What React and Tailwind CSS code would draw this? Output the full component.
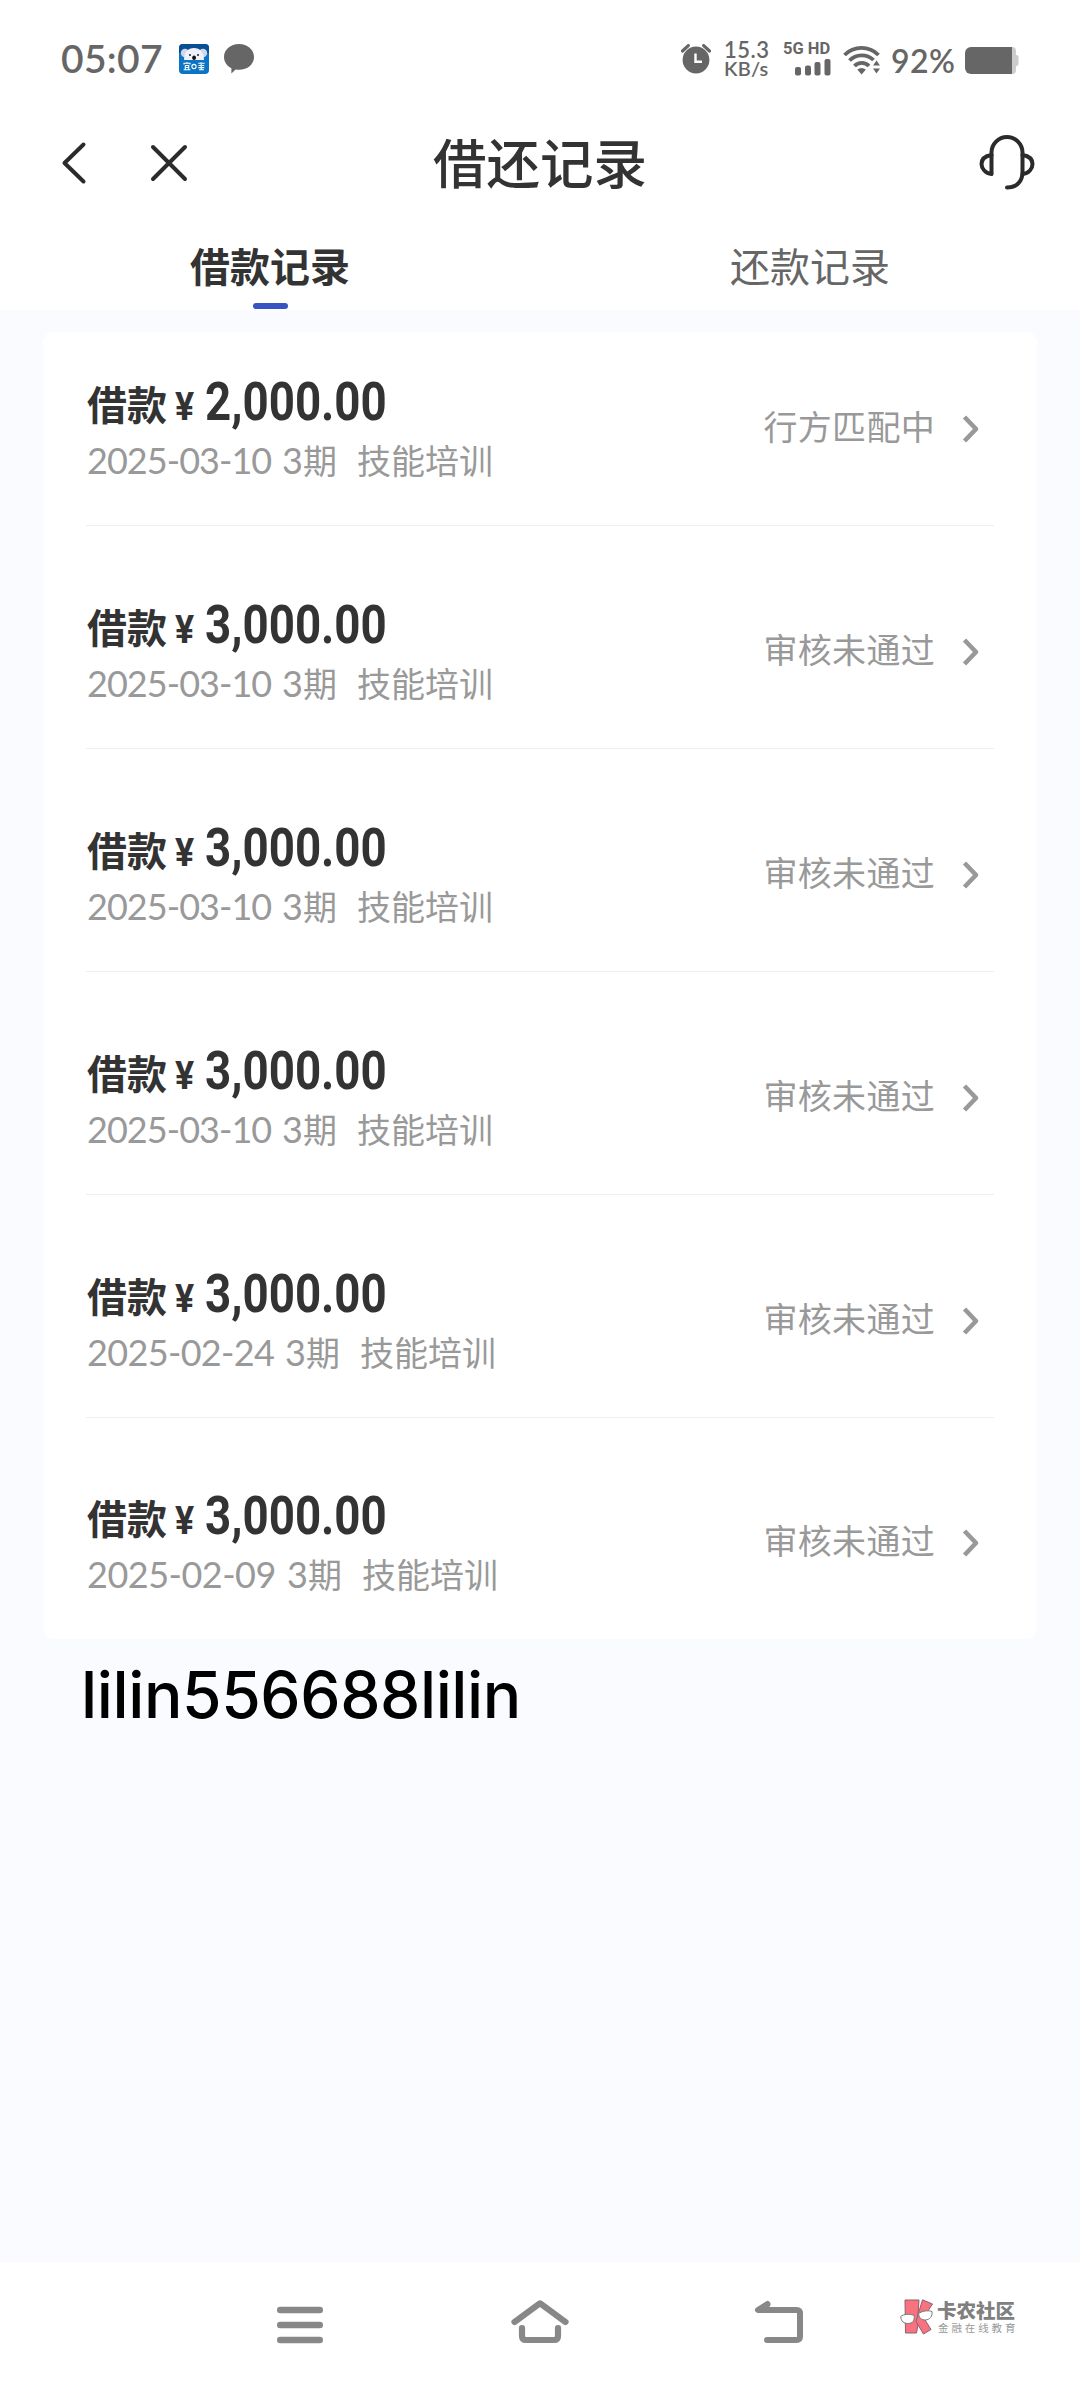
import React from 'react'

const records = [
  { amount: '2,000.00', date: '2025-03-10', status: '行方匹配中', dateClass: 'w-[195px] tracking-[-0.95px]' },
  { amount: '3,000.00', date: '2025-03-10', status: '审核未通过', dateClass: 'w-[195px] tracking-[-0.95px]' },
  { amount: '3,000.00', date: '2025-03-10', status: '审核未通过', dateClass: 'w-[195px] tracking-[-0.95px]' },
  { amount: '3,000.00', date: '2025-03-10', status: '审核未通过', dateClass: 'w-[195px] tracking-[-0.95px]' },
  { amount: '3,000.00', date: '2025-02-24', status: '审核未通过', dateClass: 'w-[198px] tracking-[-0.65px]' },
  { amount: '3,000.00', date: '2025-02-09', status: '审核未通过', dateClass: 'w-[200px] tracking-[-0.5px]' },
]

const AppBadge = () => (
  <svg className="w-[30px] h-[30px] ml-[18px]" viewBox="0 0 30 30">
    <rect width="30" height="30" rx="4" fill="#0b74c4" />
    <path d="M0 4a4 4 0 0 1 4-4h22a4 4 0 0 1 4 4v5H0z" fill="#0a4f94" />
    <circle cx="6" cy="9" r="4.2" fill="#cfd6ee" />
    <circle cx="24" cy="9" r="4.2" fill="#cfd6ee" />
    <path d="M5 16c0-8 4-12 10-12s10 4 10 12z" fill="#eef1fa" />
    <circle cx="11" cy="11" r="1" fill="#222" />
    <circle cx="19" cy="11" r="1" fill="#222" />
    <rect x="13.3" y="11.5" width="3.6" height="4.5" rx="1.8" fill="#111" />
    <g stroke="#fff" strokeWidth="1.1" fill="none">
      <path d="M5 20.5v-1.2h6v1.2M8 18v1.3M6.3 21.5h3.4v4M6.3 21.5v4M6.3 23.5h3.4M4.6 25.8h6.8" />
      <circle cx="15" cy="22.5" r="2.1" />
      <path d="M19.2 19.3h2.6M23 19.3h2.6M19.5 21.5h2.4M23 21.5h2.2M19.3 23.6h6M20 25.8h5M22.2 18.2v7.4" />
    </g>
  </svg>
)

const StatusBar = () => (
  <div className="h-[110px] flex items-start pt-[42px] pl-[61px] pr-[61px] text-[#666]">
    <span className="w-[100px] -mt-px whitespace-nowrap font-['Lato'] font-semibold text-[39px] leading-[34px] tracking-[0.3px]">05:07</span>
    <div className="flex pt-[2px]">
      <AppBadge />
      <svg className="w-[30px] h-[30px] ml-[15px]" viewBox="0 0 30 30" fill="#666">
        <path d="M15 0C23.5 0 30 5.6 30 13s-6.500 12.800-15 12.800c-1.200 0-2.300-.1-3.400-.300L7.400 29.400V24.200C2.900 22 0 17.900 0 13 0 5.600 6.500 0 15 0z" />
      </svg>
    </div>
    <div className="flex-1" />
    <svg className="w-[30px] h-[30px] mt-[2px]" viewBox="0 0 30 30">
      <circle cx="15" cy="16" r="13.400" fill="#666" />
      <path d="M1.500 7L7.300 1.600M28.500 7L22.700 1.600" stroke="#666" strokeWidth="3.200" strokeLinecap="round" />
      <path d="M14.500 9.500v8.300h6.500" stroke="#fff" strokeWidth="2.400" fill="none" />
    </svg>
    <div className="ml-[13px] w-[48px] font-['Lato'] font-semibold whitespace-nowrap -mt-[2px]">
      <div className="text-[22px] leading-[19px] tracking-[0.5px]">15.3</div>
      <div className="text-[20px] leading-[19px] tracking-[0.200px]">KB/s</div>
    </div>
    <div className="ml-[11px] w-[48px]">
      <div className="font-['Roboto'] font-bold text-[16.500px] leading-[13px] whitespace-nowrap">5G HD</div>
      <svg className="w-[36px] h-[17px] ml-[12px] mt-[4px]" viewBox="0 0 36 17" fill="#666">
        <rect x="0" y="8" width="6" height="8.500" rx="2" />
        <rect x="10" y="6.500" width="6" height="10" rx="2" />
        <rect x="19.500" y="3" width="6" height="13.500" rx="2" />
        <rect x="29.500" y="0" width="6" height="16.500" rx="2" />
      </svg>
    </div>
    <svg className="w-[38px] h-[30px] ml-[12px] mt-[3px]" viewBox="0 0 38 30" fill="none" stroke="#666" strokeWidth="3.800">
      <path d="M1.500 10a24 24 0 0 1 34 0" />
      <path d="M6.500 15.500a17 17 0 0 1 24-.500" />
      <path d="M11.500 21a10 10 0 0 1 14.500 0" />
      <path d="M14.300 24.500q4.300-3.200 8.600 0l-4.300 5z" fill="#666" stroke="none" />
      <path d="M30 20.500l3.500-5 3.500 5zM30 23.500l3.500 5 3.500-5z" fill="#666" stroke="none" />
    </svg>
    <span className="ml-[10px] w-[68px] mt-[3px] whitespace-nowrap font-['Lato'] font-semibold text-[32px] leading-[32px] tracking-[0.400px]">92%</span>
    <svg className="w-[54px] h-[27px] ml-[6px] mt-[5px]" viewBox="0 0 54 27">
      <rect x="40" width="11" height="27" rx="4" fill="#ccc" />
      <rect x="48" y="8" width="5.500" height="11" rx="2" fill="#ccc" />
      <path d="M6 0h41v27H6a6 6 0 0 1-6-6V6a6 6 0 0 1 6-6z" fill="#666" />
    </svg>
  </div>
)

const TitleBar = () => (
  <div className="h-[105px] flex items-center pl-[60px] pr-[45px] text-[#333]">
    <svg className="w-[30px] h-[44px]" viewBox="0 0 30 44" fill="none" stroke="#2b2b2b" strokeWidth="4" strokeLinecap="round" strokeLinejoin="round">
      <path d="M23.500 3.500L4.500 22l19 18.500" />
    </svg>
    <svg className="w-[40px] h-[40px] ml-[59px]" viewBox="0 0 40 40" fill="none" stroke="#2b2b2b" strokeWidth="4" strokeLinecap="round">
      <path d="M4 4l32 32M36 4L4 36" />
    </svg>
    <h1 className="flex-1 pl-[244px] -mt-[4px] font-['Noto_Sans_CJK_SC'] font-medium text-[53.500px] leading-[80px] whitespace-nowrap">借还记录</h1>
    <svg className="w-[56px] h-[56px] -mt-[2px]" viewBox="0 0 56 56" fill="none" stroke="#2b2b2b" strokeWidth="4" strokeLinecap="round">
      <path d="M12.500 39V18.500a15.500 15.500 0 0 1 31 0V38c0 9-5.500 15.500-15.500 15.500" />
      <path d="M12.500 21C6 22 2.500 25.500 2.500 30s4 9.500 10 10M43.500 21c6.500 1 10 4.500 10 9s-3.500 9.500-10 10" />
    </svg>
  </div>
)

const Tabs = () => (
  <div className="h-[95px] grid grid-cols-2 font-['Noto_Sans_CJK_SC'] text-[40px] leading-[60px] text-center">
    <div className="flex flex-col items-center pt-[20px]">
      <span className="font-bold text-[#333]">借款记录</span>
      <span className="w-[35px] h-[6px] mt-[8px] rounded-full bg-[#3754c0]" />
    </div>
    <div className="pt-[20px] text-[#666]">还款记录</div>
  </div>
)

const RecordRow = ({ amount, date, status, dateClass }) => (
  <li className="h-[223px] first:h-[194px] last:h-[222px] flex items-end justify-between border-b border-[#eee] last:border-transparent font-['Noto_Sans_CJK_SC']">
    <div className="pb-[40px] pl-px">
      <div className="flex h-[50px] mb-[8px] items-baseline font-bold text-[#333] text-[40px] leading-[50px]">
        <span>借款</span>
        <span className="ml-[8px] w-[30px] font-['Roboto'] text-[38px] origin-left scale-x-[0.940]">¥</span>
        <span className="origin-left scale-x-[0.862] font-['Roboto'] text-[53px] leading-[50px] whitespace-nowrap">{amount}</span>
      </div>
      <div className="flex h-[50px] items-baseline text-[#999] text-[34px] leading-[50px] whitespace-nowrap">
        <span className={`font-['Lato'] text-[36px] ${dateClass}`}>{date}</span>
        <span className="font-['Lato'] text-[36px]">3</span>
        <span>期</span>
        <span className="ml-[20px]">技能培训</span>
      </div>
    </div>
    <div className="flex items-center pb-[82px] pr-[14px] text-[#999] text-[34px] leading-[34px] tracking-[0.3px]">
      <span>{status}</span>
      <svg className="w-[18px] h-[30px] ml-[27px] mt-[3px] -mb-[3px]" viewBox="0 0 18 30" fill="none" stroke="#999" strokeWidth="4.600" strokeLinejoin="round">
        <path d="M2.500 3L14 15 2.500 27" />
      </svg>
    </div>
  </li>
)

const Watermark = () => (
  <div className="flex items-center font-['Noto_Sans_CJK_SC'] whitespace-nowrap">
    <svg className="w-[34px] h-[36px]" viewBox="0 0 34 36">
      <g fill="#f8727f" stroke="#8b6268" strokeWidth="1">
        <path d="M5 1h14l-1 15 1.500 1-3 17H5.500z" />
        <path d="M22.500 0.800L32.500 5l-9 13.500 7.500 12-7.500 4.500-7.500-12.500z" />
      </g>
      <g fill="#fff" stroke="#777" strokeWidth="1">
        <path d="M.7 17.500c3-2.500 9-3 13.500-1 .5 5-1.500 8-6 8-4.500 0-7-2-7.500-7z" />
        <path d="M18.500 14.500c4-2.500 9-3.500 13.500-2 .5 5-2 8-6.500 8.500-4 0-6.500-2-7-6.500z" />
      </g>
    </svg>
    <div className="ml-[3px]">
      <div className="font-black text-[19.500px] leading-[21px] text-[#808080]">卡农社区</div>
      <div className="text-[10.500px] leading-[15px] tracking-[2.900px] text-[#999] pl-[1px]">金融在线教育</div>
    </div>
  </div>
)

const NavBar = () => (
  <div className="h-[126px] bg-white flex items-start pt-[37px] pl-[277px]">
    <svg className="w-[46px] h-[48px]" viewBox="0 0 46 48" stroke="#888" strokeWidth="6.400" strokeLinecap="round">
      <path d="M3.200 11h39.600M3.200 26h39.600M3.200 41h39.600" />
    </svg>
    <svg className="w-[58px] h-[48px] ml-[188px]" viewBox="0 0 58 48" fill="none" stroke="#888" strokeWidth="6.200" strokeLinecap="round" strokeLinejoin="round">
      <path d="M3.500 23L29 4.300 54.500 23" />
      <path d="M11 29v8q0 4 4 4h28q4 0 4-4v-8" />
    </svg>
    <svg className="w-[50px] h-[48px] ml-[185px]" viewBox="0 0 50 48" fill="none" stroke="#888" strokeWidth="6" strokeLinecap="round" strokeLinejoin="round">
      <path d="M13.500 5L4 11h38.500q3.500 0 3.500 3.500v23q0 3.500-3.500 3.500H13" />
      <path d="M13.500 5v5H5z" fill="#888" strokeWidth="4" />
    </svg>
    <div className="ml-[96px]">
      <Watermark />
    </div>
  </div>
)

export default function App() {
  return (
    <div className="w-[1080px] h-[2388px] flex flex-col overflow-hidden bg-[#fafbff]">
      <header className="bg-white">
        <StatusBar />
        <TitleBar />
        <Tabs />
      </header>

      <main className="flex-1">
        <ul className="mt-[22px] mx-[43px] h-[1307px] px-[43px] rounded-[10px] bg-white">
          {records.map((r, i) => <RecordRow key={i} {...r} />)}
        </ul>
        <p className="mt-[16px] pl-[81px] font-['Inter'] font-medium text-[64px] leading-[80px] tracking-[-0.400px] text-black">lilin556688lilin</p>
      </main>

      <NavBar />
    </div>
  )
}
